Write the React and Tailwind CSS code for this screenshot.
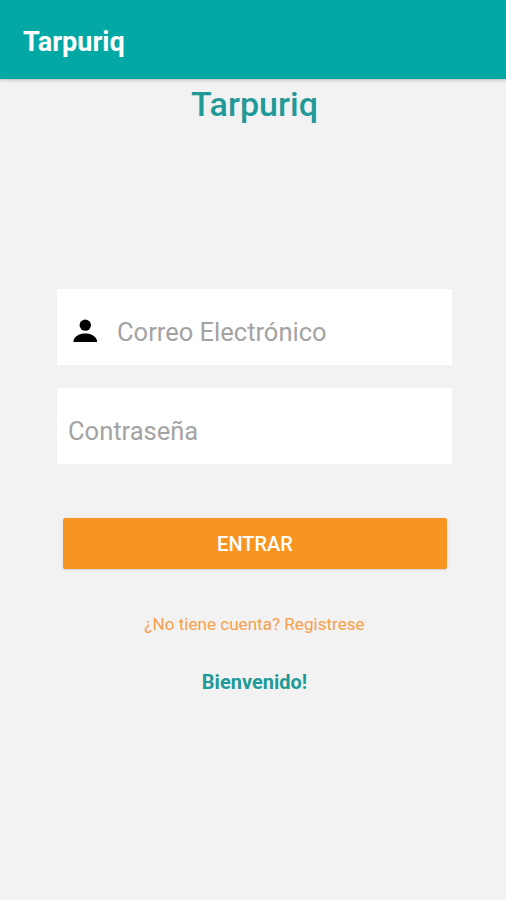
import { useState } from 'react'

function PersonIcon() {
  return (
    <svg viewBox="0 0 24 24" className="mt-[7px] h-[34px] w-[34px] shrink-0 fill-black" aria-hidden="true">
      <circle cx="12.2" cy="7.9" r="4" />
      <path d="M12.2 13.8c-4.2 0-7.6 1.9-8.3 5.1v.8h16.6v-.8c-.7-3.2-4.1-5.1-8.3-5.1z" />
    </svg>
  )
}

function App() {
  const [email, setEmail] = useState('')
  const [password, setPassword] = useState('')

  return (
    <div className="flex h-[900px] w-full flex-col bg-[#f2f2f2] font-[Roboto,sans-serif]">
      <header className="flex h-[79px] shrink-0 items-center bg-[#03a8a4] px-[23px] pt-1 shadow-[0_1px_3px_rgba(0,0,0,0.25)]">
        <span className="text-[27px] font-bold leading-8 text-white">Tarpuriq</span>
      </header>

      <main className="flex flex-col pl-[57px] pr-[54px] pt-[5px]">
        <h1 className="text-center text-[34px] font-medium leading-10 text-[#1f9a98]">Tarpuriq</h1>

        <form className="mt-[165px] flex flex-col" onSubmit={(event) => event.preventDefault()}>
          <label className="flex h-[76px] items-center bg-white pl-[11px]">
            <PersonIcon />
            <input
              type="email"
              value={email}
              onChange={(event) => setEmail(event.target.value)}
              className="ml-[15px] mt-2.5 w-full text-[25.5px] outline-none placeholder:text-[#a3a3a3]"
              placeholder="Correo Electrónico"
            />
          </label>
          <label className="mt-[23px] flex h-[76px] items-center bg-white pl-[11px]">
            <input
              type="password"
              value={password}
              onChange={(event) => setPassword(event.target.value)}
              className="mt-2.5 w-full text-[25.5px] outline-none placeholder:text-[#a3a3a3]"
              placeholder="Contraseña"
            />
          </label>
          <button
            type="submit"
            className="ml-[6px] mt-[54px] h-[51px] w-[384px] rounded-[2px] bg-[#f79520] text-[20px] font-medium text-white shadow"
          >
            ENTRAR
          </button>
        </form>

        <a className="mt-[43px] text-center text-[17.1px] leading-6 text-[#f7a04a]">¿No tiene cuenta? Registrese</a>
        <p className="mt-[34px] text-center text-[20px] font-bold leading-6 text-[#1f9a98]">Bienvenido!</p>
      </main>
    </div>
  )
}

export default App
